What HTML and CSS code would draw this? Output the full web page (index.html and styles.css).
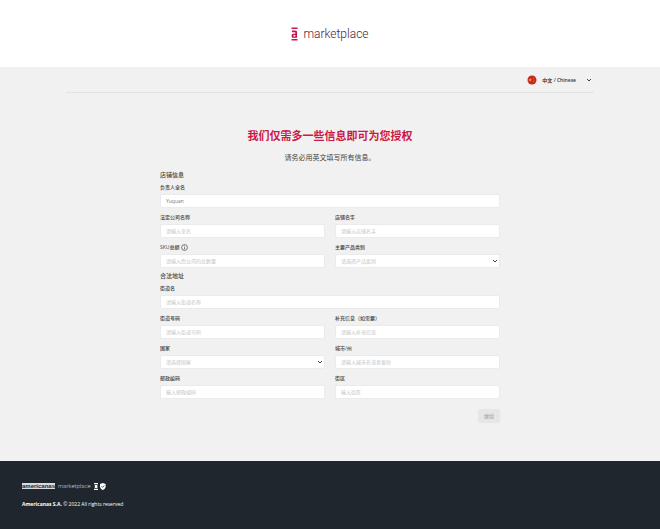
FILE: index.html
```html
<!DOCTYPE html>
<html lang="zh-CN">
<head>
  <meta charset="UTF-8" />
  <meta name="viewport" content="width=device-width, initial-scale=1" />
  <title>Americanas Marketplace</title>
  <link rel="stylesheet" href="styles.css">
</head>
<body>

  <header class="header">
    <svg class="logo-mark" viewBox="0 0 7 14" aria-hidden="true">
      <path d="M0.5 0.5h6v1.6h-6zM0.5 11.9h6v1.6h-6z" />
      <path d="M1 3.600h3.200c1.200 0 1.900.7 1.900 1.800v5.400H1.900C1 10.800.6 10 .6 8.900c0-1.300.6-2.100 1.800-2.100h1.900V5.300H1zM4.300 8.100H2.800c-.5 0-.5 1.300 0 1.300h1.500z" fill-rule="evenodd" />
    </svg>
    <span class="logo-text">marketplace</span>
  </header>

  <main class="main">
    <div class="language-bar">
      <button type="button" class="language">
        <svg class="flag" viewBox="0 0 10 10" aria-hidden="true">
          <circle cx="5" cy="5" r="4.500" fill="#c8281e" />
          <path d="M3.200 3l.5 1.200 1.300.1-1 .8.300 1.300-1.100-.7-1.100.7.300-1.300-1-.8 1.300-.1z" fill="#f0a03c" />
          <path d="M6.200 3h.8v.8h-.8zM6.800 4.700h.8v.8h-.8zM6.200 6.300h.8v.8h-.8z" fill="#e8893a" />
        </svg>
        <span>中文 / Chinese</span>
        <svg class="chevron" viewBox="0 0 6 6" aria-hidden="true"><path d="M1 2l2 2 2-2" /></svg>
      </button>
    </div>

    <form class="form">
      <h1>我们仅需多一些信息即可为您授权</h1>
      <p class="subtitle">请务必用英文填写所有信息。</p>

      <h2>店铺信息</h2>
      <div class="fields">
        <div class="field wide">
          <label for="owner">负责人全名</label>
          <input type="text" id="owner" value="Yuquan" />
        </div>
        <div class="field">
          <label for="company">法定公司名称</label>
          <input type="text" id="company" placeholder="请输入全名" />
        </div>
        <div class="field">
          <label for="store">店铺名字</label>
          <input type="text" id="store" placeholder="请输入店铺名字" />
        </div>
        <div class="field">
          <label for="gmv">SKU总额
            <svg class="info" viewBox="0 0 6 6" aria-hidden="true"><circle cx="3" cy="3" r="2.500" /><path d="M3 2.700v1.800M3 1.400v.6" /></svg>
          </label>
          <input type="text" id="gmv" placeholder="请输入您公司的总数量" />
        </div>
        <div class="field">
          <label for="category">主要产品类别</label>
          <div class="select">
            <select id="category"><option>请选择产品类别</option></select>
            <svg class="chevron" viewBox="0 0 6 6" aria-hidden="true"><path d="M1 2l2 2 2-2" /></svg>
          </div>
        </div>
      </div>

      <h2>合法地址</h2>
      <div class="fields">
        <div class="field wide">
          <label for="street">街道名</label>
          <input type="text" id="street" placeholder="请输入街道名称" />
        </div>
        <div class="field">
          <label for="number">街道号码</label>
          <input type="text" id="number" placeholder="请输入街道号码" />
        </div>
        <div class="field">
          <label for="extra">补充信息（如需要）</label>
          <input type="text" id="extra" placeholder="请输入补充信息" />
        </div>
        <div class="field">
          <label for="country">国家</label>
          <div class="select">
            <select id="country"><option>请选择国家</option></select>
            <svg class="chevron" viewBox="0 0 6 6" aria-hidden="true"><path d="M1 2l2 2 2-2" /></svg>
          </div>
        </div>
        <div class="field">
          <label for="city">城市/州</label>
          <input type="text" id="city" placeholder="请输入城市名或者省份" />
        </div>
        <div class="field">
          <label for="zip">邮政编码</label>
          <input type="text" id="zip" placeholder="输入邮政编码" />
        </div>
        <div class="field">
          <label for="district">街区</label>
          <input type="text" id="district" placeholder="输入街区" />
        </div>
      </div>

      <div class="actions">
        <button type="submit" class="submit" disabled>继续</button>
      </div>
    </form>
  </main>

  <footer class="footer">
    <div class="brand">
      <span class="brand-name">americanas</span>
      <span class="brand-text">marketplace</span>
      <svg class="brand-icons" viewBox="0 0 12 7" aria-hidden="true">
        <path d="M0 0h4v1.200H0zM0 5.800h4V7H0zM.8 1.900h2.600v3.200H.8z" />
        <path d="M6 1l2.800-1 2.800 1v2.500C11.600 5.400 10.200 6.500 8.800 7 7.400 6.500 6 5.400 6 3.500z" />
        <path d="M7.500 3.400l1 1 1.700-1.900" fill="none" stroke="#20262d" stroke-width=".8" />
      </svg>
    </div>
    <p class="copyright"><strong>Americanas S.A.</strong> © 2022 All rights reserved</p>
  </footer>

</body>
</html>
```
FILE: styles.css
```css
* {
  box-sizing: border-box;
}
body {
  margin: 0;
  min-height: 100vh;
  display: flex;
  flex-direction: column;
  background: #f1f1f1;
  color: #444;
  font-family: "Open Sans", "Noto Sans CJK SC", sans-serif;
  font-size: 5px;
  line-height: 8px;
}
h1, h2, p {
  margin: 0;
}
button, input, select {
  font: inherit;
  color: inherit;
}

/* Header */
.header {
  display: flex;
  justify-content: center;
  align-items: center;
  gap: 5px;
  height: 67px;
  background: #fff;
}
.logo-mark {
  width: 7px;
  height: 14px;
  fill: #c4174a;
}
.logo-text {
  font-family: Roboto, Arial, sans-serif;
  font-size: 12px;
  font-weight: 300;
  line-height: 16px;
  color: #4c1a3c;
}

/* Language */
.main {
  flex: 1;
  padding: 0 10%;
}
.language-bar {
  display: flex;
  justify-content: flex-end;
  height: 26px;
  border-bottom: 1px solid #e2e2e2;
}
.language {
  display: flex;
  align-items: center;
  gap: 5px;
  padding: 0;
  border: none;
  background: none;
  font-weight: 600;
  color: #333;
}
.flag {
  width: 10px;
  height: 10px;
}
.chevron {
  width: 6px;
  height: 6px;
  fill: none;
  stroke: #444;
  stroke-width: 1;
}
.language .chevron {
  margin: 0 2px 0 5px;
}

/* Form */
.form {
  max-width: 340px;
  margin: 0 auto;
  padding-top: 35px;
}
h1 {
  font-size: 11px;
  line-height: 16px;
  color: #cc1846;
  text-align: center;
}
.subtitle {
  margin: 9px 0 8px;
  font-size: 7px;
  line-height: 10px;
  text-align: center;
}
h2 {
  font-size: 6px;
  font-weight: 500;
  line-height: 8px;
  margin-bottom: 4px;
}
.fields {
  display: grid;
  grid-template-columns: 1fr 1fr;
  gap: 5px 10px;
  margin-bottom: 4px;
}
.field {
  display: flex;
  flex-direction: column;
  gap: 3px;
}
.wide {
  grid-column: 1 / -1;
}
label {
  display: flex;
  align-items: center;
  gap: 2px;
  height: 8px;
  font-weight: 500;
}
.info {
  width: 7px;
  height: 7px;
  fill: none;
  stroke: #444;
  stroke-width: .6;
}
input, select {
  width: 100%;
  height: 14px;
  padding: 0 5px;
  border: 1px solid #ebebeb;
  border-radius: 2px;
  background: #fff;
  color: #777;
}
input::placeholder {
  color: #c4c4c4;
  opacity: 1;
}
.select {
  display: grid;
  align-items: center;
}
.select > * {
  grid-area: 1 / 1;
}
select {
  appearance: none;
  color: #c4c4c4;
}
.select .chevron {
  justify-self: end;
  margin-right: 2px;
  pointer-events: none;
}
.actions {
  display: flex;
  justify-content: flex-end;
  padding-top: 6px;
}
.submit {
  height: 14px;
  padding: 0 6px;
  border: none;
  border-radius: 2px;
  background: #e6e6e6;
  color: #999;
}

/* Footer */
.footer {
  padding: 21px 22px;
  background: #20262d;
  color: #fff;
}
.brand {
  display: flex;
  align-items: center;
  gap: 3px;
  margin-bottom: 10px;
}
.brand-name {
  background: #d8dbde;
  color: #20262d;
  font-family: "Liberation Sans", Arial, sans-serif;
  font-size: 6px;
  font-weight: bold;
  line-height: 6px;
}
.brand-text {
  font-family: Roboto, Arial, sans-serif;
  font-size: 6px;
  font-weight: 300;
  color: #d0d4d8;
}
.brand-icons {
  width: 12px;
  height: 7px;
  fill: #fff;
}
```
